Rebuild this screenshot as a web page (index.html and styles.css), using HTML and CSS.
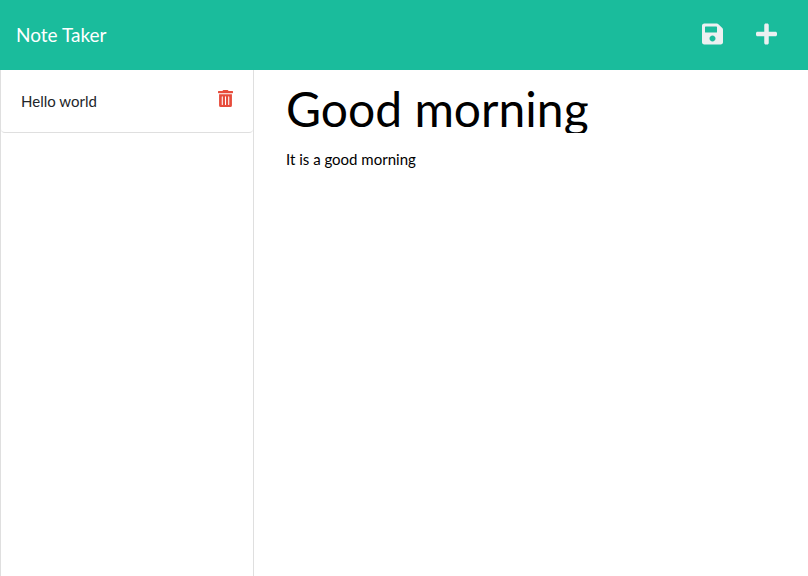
FILE: index.html
```html
<!DOCTYPE html>
<html lang="en">
<head>
  <meta charset="utf-8">
  <meta name="viewport" content="width=device-width, initial-scale=1">
  <title>Note Taker</title>
  <link rel="stylesheet" href="styles.css">
</head>
<body>
  <header class="navbar">
    <a class="brand" href="/">Note Taker</a>
    <div class="actions">
      <button class="icon-button" type="button" aria-label="Save note">
        <svg class="nav-icon" viewBox="0 0 448 512" aria-hidden="true"><path d="M433.941 129.941l-83.882-83.882A48 48 0 0 0 316.118 32H48C21.49 32 0 53.49 0 80v352c0 26.51 21.49 48 48 48h352c26.51 0 48-21.49 48-48V163.882a48 48 0 0 0-14.059-33.941zM224 416c-35.346 0-64-28.654-64-64 0-35.346 28.654-64 64-64s64 28.654 64 64c0 35.346-28.654 64-64 64zm96-304.52V212c0 6.627-5.373 12-12 12H76c-6.627 0-12-5.373-12-12V108c0-6.627 5.373-12 12-12h228.52c3.183 0 6.235 1.264 8.485 3.515l3.48 3.48A11.996 11.996 0 0 1 320 111.48z"/></svg>
      </button>
      <button class="icon-button" type="button" aria-label="New note">
        <svg class="nav-icon" viewBox="0 0 448 512" aria-hidden="true"><path d="M416 208H272V64c0-17.67-14.33-32-32-32h-32c-17.67 0-32 14.33-32 32v144H32c-17.67 0-32 14.33-32 32v32c0 17.67 14.33 32 32 32h144v144c0 17.67 14.33 32 32 32h32c17.67 0 32-14.33 32-32V304h144c17.67 0 32-14.33 32-32v-32c0-17.67-14.33-32-32-32z"/></svg>
      </button>
    </div>
  </header>
  <main class="layout">
    <aside class="sidebar">
      <ul class="note-list">
        <li class="note-item">
          <span>Hello world</span>
          <button class="icon-button delete" type="button" aria-label="Delete note">
            <svg class="trash-icon" viewBox="0 0 448 512" aria-hidden="true"><path d="M32 464a48 48 0 0 0 48 48h288a48 48 0 0 0 48-48V128H32zm272-256a16 16 0 0 1 32 0v224a16 16 0 0 1-32 0zm-96 0a16 16 0 0 1 32 0v224a16 16 0 0 1-32 0zm-96 0a16 16 0 0 1 32 0v224a16 16 0 0 1-32 0zM432 32H312l-9.4-18.7A24 24 0 0 0 281.1 0H166.8a23.72 23.72 0 0 0-21.4 13.3L136 32H16A16 16 0 0 0 0 48v32a16 16 0 0 0 16 16h416a16 16 0 0 0 16-16V48a16 16 0 0 0-16-16z"/></svg>
          </button>
        </li>
      </ul>
    </aside>
    <section class="editor">
      <input class="note-title" type="text" aria-label="Note title" value="Good morning">
      <textarea class="note-text" aria-label="Note text">It is a good morning</textarea>
    </section>
  </main>
</body>
</html>
```
FILE: styles.css
```css
* {
  box-sizing: border-box;
}

body {
  margin: 0;
  min-height: 100vh;
  display: flex;
  flex-direction: column;
  background: #fff;
  color: #212529;
  font: 15px/24px Lato, sans-serif;
}

.navbar {
  display: flex;
  align-items: center;
  justify-content: space-between;
  padding: 20px 31px 20px 16px;
  background: #1abc9c;
}

.brand {
  color: #fff;
  font-size: 19px;
  line-height: 30px;
  text-decoration: none;
}

.actions {
  display: flex;
  gap: 33px;
  padding-bottom: 2px;
}

.icon-button {
  display: flex;
  padding: 0;
  border: 0;
  background: none;
  color: #ecf0f1;
  cursor: pointer;
}

.icon-button svg {
  display: block;
  fill: currentColor;
}

.nav-icon {
  width: 21px;
  height: 24px;
}

.layout {
  flex: 1;
  display: grid;
  grid-template-columns: 254px 1fr;
}

.sidebar {
  border: solid #dfdfdf;
  border-width: 0 1px;
}

.note-list {
  margin: 0;
  padding: 0;
  list-style: none;
}

.note-item {
  display: flex;
  align-items: flex-start;
  justify-content: space-between;
  padding: 19px 20px;
  border-bottom: 1px solid #dfdfdf;
  border-radius: 0 0 4px 4px;
}

.delete {
  color: #e74c3c;
}

.trash-icon {
  width: 15px;
  height: 19px;
}

.editor {
  display: flex;
  flex-direction: column;
  gap: 14px;
  padding: 14px 32px 0;
}

.note-title,
.note-text {
  width: 100%;
  padding: 0;
  border: 0;
  outline: 0;
  background: transparent;
  color: #000;
  font-family: inherit;
}

.note-title {
  height: 49px;
  font-size: 48px;
  line-height: 49px;
}

.note-text {
  flex: 1;
  font-size: 15px;
  line-height: 24px;
  resize: none;
}
```
